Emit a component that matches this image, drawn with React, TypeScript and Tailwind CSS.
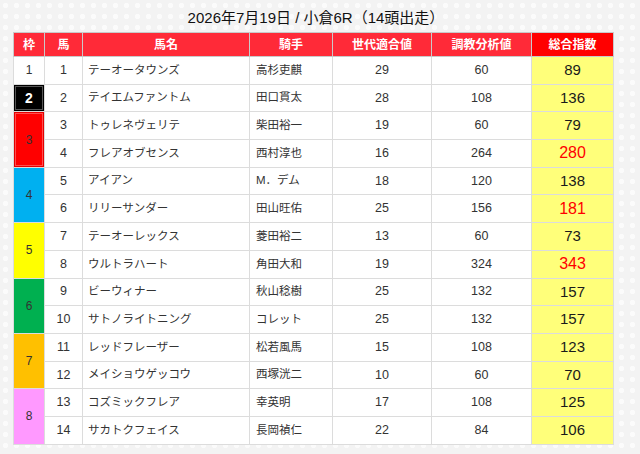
import React from 'react';

interface Horse {
  frame: number;
  no: number;
  name: string;
  jockey: string;
  gen: number;
  train: number;
  total: number;
}

const horses: Horse[] = [
  { frame: 1, no: 1, name: 'テーオータウンズ', jockey: '高杉吏麒', gen: 29, train: 60, total: 89 },
  { frame: 2, no: 2, name: 'テイエムファントム', jockey: '田口貫太', gen: 28, train: 108, total: 136 },
  { frame: 3, no: 3, name: 'トゥレネヴェリテ', jockey: '柴田裕一', gen: 19, train: 60, total: 79 },
  { frame: 3, no: 4, name: 'フレアオブセンス', jockey: '西村淳也', gen: 16, train: 264, total: 280 },
  { frame: 4, no: 5, name: 'アイアン', jockey: 'M．デム', gen: 18, train: 120, total: 138 },
  { frame: 4, no: 6, name: 'リリーサンダー', jockey: '田山旺佑', gen: 25, train: 156, total: 181 },
  { frame: 5, no: 7, name: 'テーオーレックス', jockey: '菱田裕二', gen: 13, train: 60, total: 73 },
  { frame: 5, no: 8, name: 'ウルトラハート', jockey: '角田大和', gen: 19, train: 324, total: 343 },
  { frame: 6, no: 9, name: 'ビーウィナー', jockey: '秋山稔樹', gen: 25, train: 132, total: 157 },
  { frame: 6, no: 10, name: 'サトノライトニング', jockey: 'コレット', gen: 25, train: 132, total: 157 },
  { frame: 7, no: 11, name: 'レッドフレーザー', jockey: '松若風馬', gen: 15, train: 108, total: 123 },
  { frame: 7, no: 12, name: 'メイショウゲッコウ', jockey: '西塚洸二', gen: 10, train: 60, total: 70 },
  { frame: 8, no: 13, name: 'コズミックフレア', jockey: '幸英明', gen: 17, train: 108, total: 125 },
  { frame: 8, no: 14, name: 'サカトクフェイス', jockey: '長岡禎仁', gen: 22, train: 84, total: 106 },
];

// frame colour cells
const frameStyle: Record<number, string> = {
  1: 'bg-white text-[#333]',
  2: 'bg-black text-white font-bold text-[14px] shadow-[inset_0_0_0_1px_#000,inset_0_0_0_2px_#555]',
  3: 'bg-[#ff0000] text-[#333] shadow-[inset_0_0_0_1px_#e60000,inset_0_0_0_2px_#ff4d4d]',
  4: 'bg-[#00b0f0] text-[#333]',
  5: 'bg-[#ffff00] text-[#333]',
  6: 'bg-[#00b050] text-[#333]',
  7: 'bg-[#ffc000] text-[#333]',
  8: 'bg-[#ff99ff] text-[#333]',
};

export default function App() {
  return (
    <div
      className="w-[640px] h-[454px] overflow-hidden bg-[#f3f3f3] bg-[radial-gradient(circle,#fbfbfb_2.5px,transparent_3px)] bg-[length:11px_11px] pt-[8px]"
      style={{ fontFamily: '"Liberation Sans", "Noto Sans CJK JP", sans-serif' }}
    >
      <h1 className="text-center text-[15px] leading-[19px] text-[#111] pr-[8px] mb-[5px] font-normal">
        2026年7月19日 / 小倉6R（14頭出走）
      </h1>

      <table className="ml-[13px] w-[600px] table-fixed border-collapse bg-white text-[12px] text-[#333]">
        <colgroup>
          <col className="w-[31px]" />
          <col className="w-[38px]" />
          <col className="w-[167px]" />
          <col className="w-[83px]" />
          <col className="w-[99px]" />
          <col className="w-[100px]" />
          <col className="w-[82px]" />
        </colgroup>
        <thead>
          <tr className="h-[24px] text-white text-[12px] font-bold">
            <th className="border border-[#c9c9c9] bg-[#ff2a38]">枠</th>
            <th className="border border-[#c9c9c9] bg-[#ff2a38]">馬</th>
            <th className="border border-[#c9c9c9] bg-[#ff2a38]">馬名</th>
            <th className="border border-[#c9c9c9] bg-[#ff2a38]">騎手</th>
            <th className="border border-[#c9c9c9] bg-[#ff2a38]">世代適合値</th>
            <th className="border border-[#c9c9c9] bg-[#ff2a38]">調教分析値</th>
            <th className="border border-[#c9c9c9] bg-[#ff0000]">総合指数</th>
          </tr>
        </thead>
        <tbody>
          {horses.map((h, i) => {
            const firstOfFrame = i === 0 || horses[i - 1].frame !== h.frame;
            const span = horses.filter(x => x.frame === h.frame).length;
            const hot = h.total >= 180;
            return (
              <tr key={h.no} className="h-[27.7px]">
                {firstOfFrame && (
                  <td
                    rowSpan={span}
                    className={`border border-[#dcdcdc] text-center ${frameStyle[h.frame]}`}
                  >
                    {h.frame}
                  </td>
                )}
                <td className="border border-[#dcdcdc] text-center text-[12.5px]">{h.no}</td>
                <td className="border border-[#dcdcdc] pl-[5px] text-[11.5px]">{h.name}</td>
                <td className="border border-[#dcdcdc] pl-[6px] text-[11.5px]">{h.jockey}</td>
                <td className="border border-[#dcdcdc] text-center text-[12.5px]">{h.gen}</td>
                <td className="border border-[#dcdcdc] text-center text-[12.5px]">{h.train}</td>
                <td
                  className={`border border-[#dcdcdc] bg-[#ffff7a] text-center ${
                    hot ? 'text-[#ff0000] text-[16px]' : 'text-[#1a1a1a] text-[15px]'
                  }`}
                >
                  {h.total}
                </td>
              </tr>
            );
          })}
        </tbody>
      </table>
    </div>
  );
}
